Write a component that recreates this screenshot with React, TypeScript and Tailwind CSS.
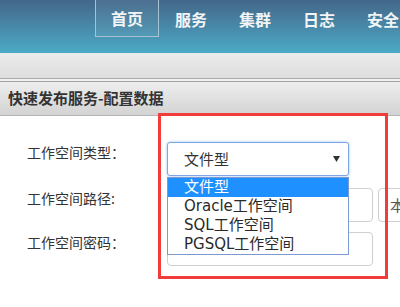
import type { ReactNode } from "react";

const cjk = "font-['Noto_Sans_CJK_SC',sans-serif]";
const mixed = "font-['DejaVu_Sans','Noto_Sans_CJK_SC',sans-serif]";

const navItems = ["首页", "服务", "集群", "日志", "安全"];
const options = ["文件型", "Oracle工作空间", "SQL工作空间", "PGSQL工作空间"];

function FormRow({ label, children, className }: { label: string; children: ReactNode; className?: string }) {
  return (
    <div className={`flex items-start pl-[27px] ${className ?? ""}`}>
      <label className="w-[140px] shrink-0 text-[14px] leading-[20px] text-[#333]">{label}</label>
      {children}
    </div>
  );
}

export default function App() {
  return (
    <div className={`relative w-[400px] h-[307px] overflow-hidden bg-white ${cjk}`}>
      {/* Top navigation */}
      <header className="h-[53px] bg-gradient-to-b from-[#43678a] to-[#4aabc6]">
        <nav className="flex pl-[95px]">
          {navItems.map((item, i) => (
            <div
              key={item}
              className={`w-[64px] h-[37px] shrink-0 flex items-center justify-center text-[16px] font-bold text-[#f2f4f6] ${
                i === 0 ? "border border-t-0 border-[#a6c3d4] bg-white/5" : ""
              }`}
            >
              {item}
            </div>
          ))}
        </nav>
      </header>

      {/* Toolbar strip */}
      <div className="h-[26px] bg-gradient-to-b from-[#ebebec] to-[#dedede] border-b border-[#a9a9a9]" />
      <div className="h-[3px] bg-[#f1f1f1] border-b border-[#a3a3a3]" />

      {/* Panel header */}
      <div className="h-[34px] bg-gradient-to-b from-[#eeeeee] to-[#d3d3d3] border-b border-[#b5b5b5] flex items-center pl-[8px]">
        <h2 className="text-[15px] font-bold text-[#333]">快速发布服务-配置数据</h2>
      </div>

      {/* Form */}
      <div className="pt-[26px]">
        <FormRow label="工作空间类型：" className="mb-[12px]">
          <div className="relative w-[182px] h-[34px] rounded-[3px] border border-[#7ea6e6] shadow-[0_0_3px_#9fc0f0] bg-white flex items-center pl-[16px] pr-[8px]">
            <span className="flex-1 text-[15px] text-[#333]">文件型</span>
            <svg width="7" height="6" viewBox="0 0 7 6" className="mb-[1px]">
              <path d="M0 0h7L3.5 6z" fill="#333" />
            </svg>
          </div>
        </FormRow>
        <FormRow label="工作空间路径:" className="mb-[10px]">
          <div className="flex gap-[5px]">
            <div className="w-[206px] h-[34px] rounded-[4px] border border-[#cfcfcf] bg-white" />
            <div className="w-[70px] h-[34px] rounded-[4px] border border-[#cfcfcf] bg-white flex items-center pl-[11px] text-[15px] text-[#555] whitespace-nowrap">
              本地浏览
            </div>
          </div>
        </FormRow>
        <FormRow label="工作空间密码：">
          <div className="w-[206px] h-[34px] rounded-[4px] border border-[#cfcfcf] bg-white" />
        </FormRow>
      </div>

      {/* Open dropdown list */}
      <ul className={`absolute left-[167px] top-[177px] w-[182px] border border-[#7b9ad0] bg-white ${mixed}`}>
        {options.map((opt, i) => (
          <li
            key={opt}
            className={`h-[19px] pl-[16px] text-[15px] leading-[19px] ${
              i === 0 ? "bg-[#1e90ff] text-white" : "text-[#2a2a2a]"
            }`}
          >
            {opt}
          </li>
        ))}
      </ul>

      {/* Annotation box */}
      <div className="absolute left-[158px] top-[113px] w-[230px] h-[166px] border-[3px] border-[#f23c3c] pointer-events-none" />
    </div>
  );
}
